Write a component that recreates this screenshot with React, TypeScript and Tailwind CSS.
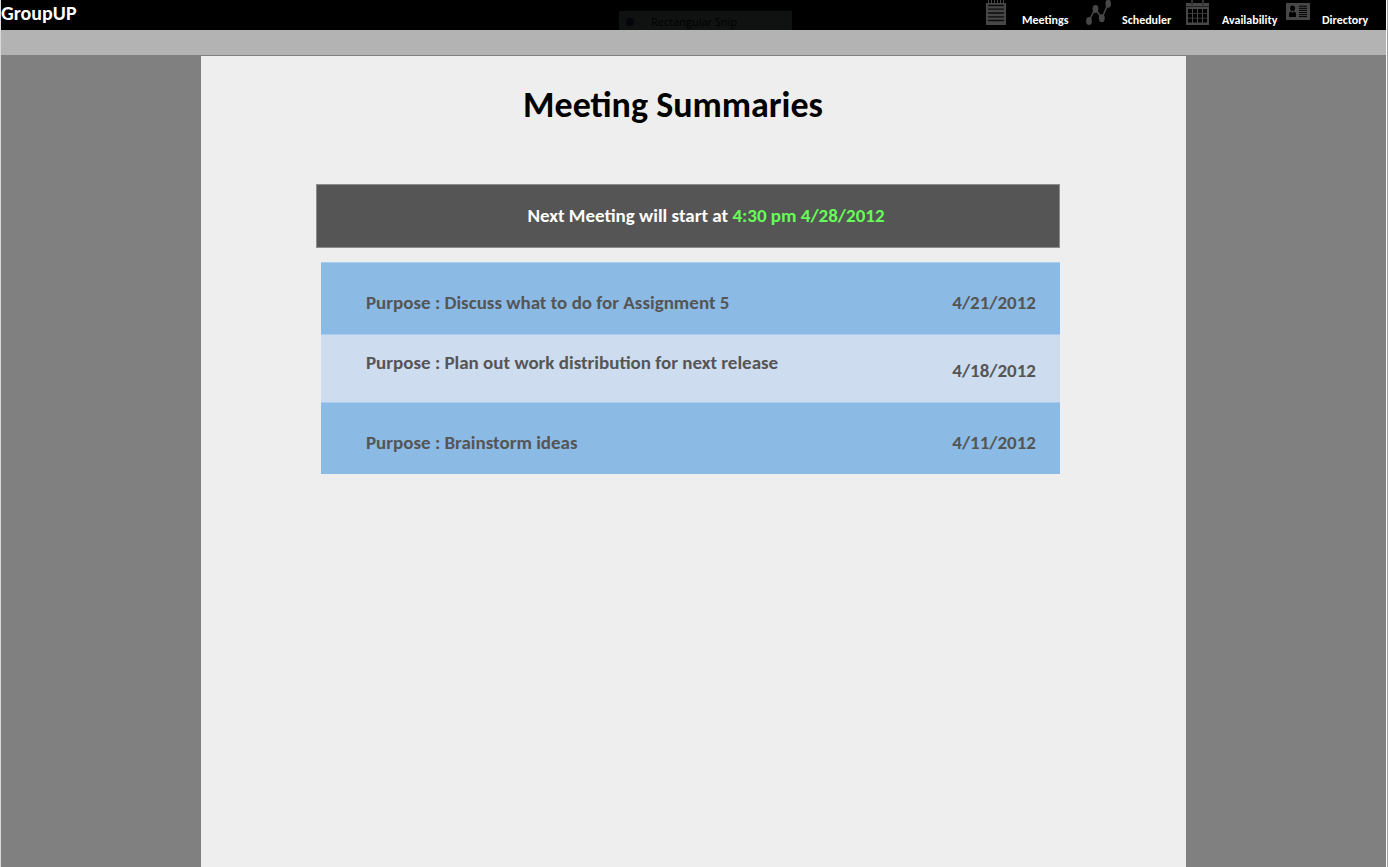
import type { ReactNode } from "react";

function NotepadIcon() {
  return (
    <svg viewBox="0 0 24 26" className="h-[26px] w-6" aria-hidden="true">
      <path
        fill="#474747"
        d="M0 3h20v22H0zM2 0h1v3H2zM5 0h1v3H5zM8 0h1v3H8zM11 0h1v3h-1zM14 0h1v3h-1zM17 0h1v3h-1z"
      />
      <path
        stroke="#0c0c0c"
        strokeWidth="1.3"
        d="M2 5.5h16M2 9.2h16M2 13h16M2 16.8h16M2 20.5h16"
      />
    </svg>
  );
}

function GraphIcon() {
  return (
    <svg viewBox="0 0 26 26" className="h-[26px] w-[26px]" fill="#474747" aria-hidden="true">
      <path d="M3 21 9 9l7 9 6-14" fill="none" stroke="#474747" strokeWidth="1.6" />
      <ellipse cx="3" cy="21" rx="2.9" ry="4" />
      <ellipse cx="9.5" cy="9" rx="2.9" ry="4" />
      <ellipse cx="15.8" cy="18.3" rx="2.9" ry="4" />
      <ellipse cx="22.2" cy="3.7" rx="2.8" ry="4" />
    </svg>
  );
}

function CalendarIcon() {
  return (
    <svg viewBox="0 0 24 26" className="h-[26px] w-6" aria-hidden="true">
      <path fill="#474747" d="M0 3h23v22H0z" />
      <path fill="#333" d="M5 0h2v5H5zM16 0h2v5h-2z" />
      <path
        fill="#000"
        d="M2 9h4v4H2zM7 9h4v4H7zM12 9h4v4h-4zM17 9h4v4h-4zM2 13.7h4v4H2zM7 13.7h4v4H7zM12 13.7h4v4h-4zM17 13.7h4v4h-4zM2 18.4h4v4H2zM7 18.4h4v4H7zM12 18.4h4v4h-4zM17 18.4h4v4h-4z"
      />
      <path stroke="#222" d="M0 6.5h23" />
    </svg>
  );
}

function CardIcon() {
  return (
    <svg viewBox="0 0 24 26" className="h-[26px] w-6" aria-hidden="true">
      <path fill="#474747" d="M0 3h24v17H0z" />
      <ellipse cx="6.5" cy="8.2" rx="2.4" ry="2.8" />
      <path d="M3 17v-3q0-2.5 2.2-2.5l1.3 1.5 1.3-1.5Q10 11.5 10 14v3z" />
      <path
        stroke="#000"
        d="M13 6.2h8M13 8.3h8M13 10.4h8M13 12.5h8M13 14.6h8M13 16.6h8"
      />
    </svg>
  );
}

const links: { label: string; icon: ReactNode }[] = [
  { label: "Meetings", icon: <NotepadIcon /> },
  { label: "Scheduler", icon: <GraphIcon /> },
  { label: "Availability", icon: <CalendarIcon /> },
  { label: "Directory", icon: <CardIcon /> },
];

const meetings = [
  {
    purpose: "Discuss what to do for Assignment 5",
    date: "4/21/2012",
    row: "h-[72px] bg-[#8bbbe5] pt-7",
    time: "",
  },
  {
    purpose: "Plan out work distribution for next release",
    date: "4/18/2012",
    row: "h-[68px] bg-[#cedcef] pt-4",
    time: "pt-2",
  },
  {
    purpose: "Brainstorm ideas",
    date: "4/11/2012",
    row: "h-[72px] bg-[#8bbbe5] pt-7",
    time: "",
  },
];

export default function App() {
  return (
    <div className="flex min-h-screen flex-col border-l border-[#d9d9d9] bg-[#808080] font-['Carlito','Lato',sans-serif] font-bold">
      <div className="flex grow flex-col border-r border-[#a0a0a0]">
        <div className="flex grow flex-col border-r border-white">
          <header className="relative flex h-[30px] justify-between bg-black text-white">
            <a href="#" className="text-xl leading-[26px]">GroupUP</a>
            <div className="absolute top-[11px] left-[618px] flex h-[19px] w-[173px] items-center bg-[#101212] pt-[2px] font-['Open_Sans',sans-serif] text-[11px] leading-[17px] font-normal text-black">
              <span className="mx-[7px] size-2 rounded-full bg-[#04040a]" />
              <span className="ml-[10px]">Rectangular Snip</span>
            </div>
            <nav className="flex">
              {links.map((link) => (
                <a key={link.label} href="#" className="flex w-[100px] text-xs leading-[14px]">
                  <span className="w-9 shrink-0">{link.icon}</span>
                  <span className="pt-[13px]">{link.label}</span>
                </a>
              ))}
            </nav>
          </header>
          <div className="h-[26px] border-b border-[#808080] bg-[#b3b3b3]" />
          <main className="mx-[200px] grow bg-[#eeeeee] pr-[126px] pl-[115px]">
            <h1 className="pt-7 pr-[30px] pb-[2px] text-center text-4xl leading-[42px]">Meeting Summaries</h1>
            <p className="mt-14 flex h-16 items-center justify-center border border-[#8c8c8c] bg-[#555555] pl-9 text-[19px] whitespace-pre text-white">
              Next Meeting will start at <time className="text-[#66ff57]">4:30 pm 4/28/2012</time>
            </p>
            <ul className="mt-[14px] ml-[5px] text-[19px] leading-6 text-[#555555]">
              {meetings.map((meeting) => (
                <li
                  key={meeting.date}
                  className={`flex justify-between border-t border-[#a9cdec] pr-6 pl-[45px] ${meeting.row}`}
                >
                  <span>Purpose : {meeting.purpose}</span>
                  <time className={meeting.time}>{meeting.date}</time>
                </li>
              ))}
            </ul>
          </main>
        </div>
      </div>
    </div>
  );
}
